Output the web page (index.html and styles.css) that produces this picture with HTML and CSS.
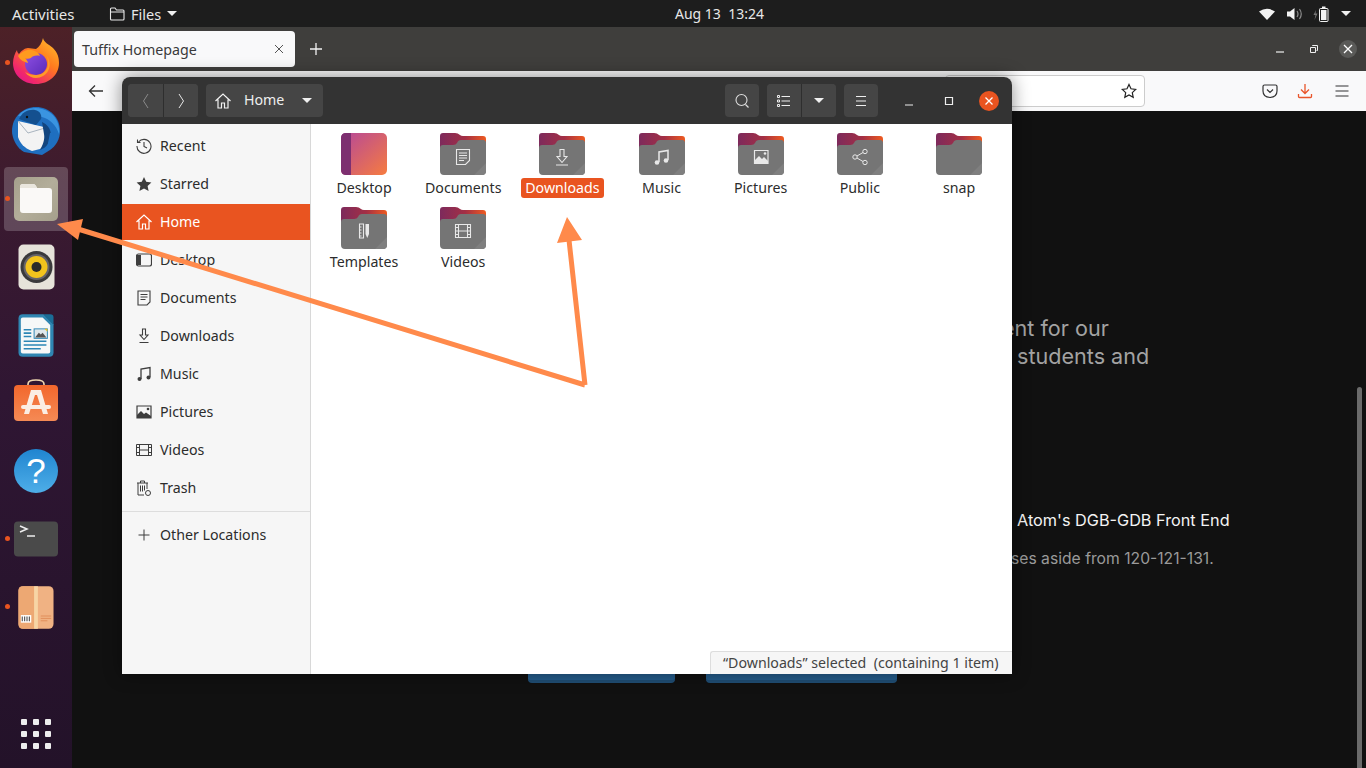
FILE: index.html
```html
<!DOCTYPE html>
<html lang="en">
<head>
<meta charset="utf-8">
<title>Files</title>
<link rel="stylesheet" href="styles.css">
</head>
<body>
<svg class="defs" width="0" height="0">
  <defs>
    <linearGradient id="fb" x1="0" y1="0" x2="1" y2="0"><stop offset="0" stop-color="#7d2a5c"/><stop offset=".55" stop-color="#a32f45"/><stop offset="1" stop-color="#ee5a20"/></linearGradient>
    <linearGradient id="dg" x1="0" y1="0" x2="1" y2="1"><stop offset="0" stop-color="#b5479a"/><stop offset="1" stop-color="#f67c40"/></linearGradient>
    <linearGradient id="ff" x1="1" y1="0" x2=".2" y2="1"><stop offset="0" stop-color="#ffc72e"/><stop offset=".45" stop-color="#ff7a1e"/><stop offset=".85" stop-color="#f0266d"/><stop offset="1" stop-color="#e3188a"/></linearGradient>
    <linearGradient id="ffp" x1="0" y1="0" x2="1" y2="1"><stop offset="0" stop-color="#8f4fe4"/><stop offset="1" stop-color="#5a2bb8"/></linearGradient>
    <linearGradient id="sw" x1="0" y1="0" x2="0" y2="1"><stop offset="0" stop-color="#f2672c"/><stop offset="1" stop-color="#f58a55"/></linearGradient>
    <linearGradient id="hp" x1="0" y1="0" x2="0" y2="1"><stop offset="0" stop-color="#2085d0"/><stop offset="1" stop-color="#4eaee8"/></linearGradient>
    <linearGradient id="kh" x1="0" y1="0" x2="1" y2="1"><stop offset="0" stop-color="#a5a08c"/><stop offset=".5" stop-color="#b3ae9a"/><stop offset="1" stop-color="#a5a08c"/></linearGradient>
    <symbol id="folder" viewBox="0 0 46 42">
      <path d="M0 12V3q0-3 3-3h12q3 0 5 2 1 1 3 1h20q3 0 3 3v10H0z" fill="url(#fb)"/>
      <path d="M0 38V15q0-3 3-3h10q3 0 4-2 1-3 4-3h22q3 0 3 3v28q0 4-4 4H4q-4 0-4-4z" fill="#757575"/>
      <path d="M46 30v8q0 4-4 4h-8z" fill="#7f7f7f"/>
    </symbol>
  </defs>
</svg>

<header class="topbar">
  <span class="top-activities">Activities</span>
  <span class="top-files">
    <svg class="ic16" viewBox="0 0 16 16"><path d="M1.500 13V3q0-1 1-1h3.500l1.500 2h6.500q1 0 1 1v8q0 1-1 1h-11.500q-1 0-1-1zM1.500 6h13" fill="none" stroke="#e8e8e8" stroke-width="1.100"/></svg>
    Files
    <i class="caret"></i>
  </span>
  <span class="top-clock">Aug 13&nbsp;&nbsp;13:24</span>
  <span class="top-tray">
    <svg class="tray-wifi" viewBox="0 0 16 12"><path d="M0 3.500Q8-2 16 3.500L8 12z" fill="#f2f2f2"/></svg>
    <svg class="tray-vol" viewBox="0 0 16 14"><path d="M0 4.500h3L7.500 1v12L3 9.500H0z" fill="#f2f2f2"/><path d="M10 4q2 3 0 6M12.500 2q3.500 5 0 10" fill="none" stroke="#8c8c8c" stroke-width="1.200"/></svg>
    <svg class="tray-bat" viewBox="0 0 16 16"><path d="M3 4 .5 9h2l-1 5 3-6.500h-2z" fill="#777"/><rect x="6.500" y="2.500" width="8.500" height="13" rx="1" fill="#1d1d1d" stroke="#f2f2f2"/><rect x="8" y="4" width="5.500" height="10" fill="#f2f2f2"/><rect x="9" y=".5" width="3.500" height="2" fill="#f2f2f2"/></svg>
    <i class="caret"></i>
  </span>
</header>

<div class="desktop">
  <nav class="dock">
    <div class="dock-item" aria-label="Firefox"><i class="dot"></i>
      <svg class="up2" width="46" height="46" viewBox="0 0 46 46">
        <path d="M30 0c1 5 6 6 10 10 5 5 6 10 6 15 0 12-10 21-23 21S0 37 0 25c0-5 2-10 4-13 0 2 1 3 2 4 2-3 6-6 9-6 3 0 5 1 8 1 3-2 6-6 7-11z" fill="url(#ff)"/>
        <circle cx="23" cy="26" r="11" fill="url(#ffp)"/>
        <path d="M33 17c4 4 5 11 2 16-2 4-7 7-12 7-4 0-8-2-11-6 3 2 7 3 11 3 6 0 11-4 12-10 0-4 0-7-2-10z" fill="#ff9a28"/>
        <path d="M5 18c3-4 9-7 14-6 4 1 7 3 8 6-4-1-8 0-9 2-2 1-5 1-6 0 2 2 3 4 3 5-4-1-8-3-10-7z" fill="#ff9a1f"/>
      </svg>
    </div>
    <div class="dock-item" aria-label="Thunderbird">
      <svg width="48" height="48" viewBox="0 0 48 48">
        <path d="M0 24C0 10 11 0 24 0s24 10 24 24c0 8-4 15-10 19l-8 5-18-3C5 41 0 32 0 24z" fill="#1f6fc0"/>
        <path d="M6 9C12 1 26-2 37 5c8 5 11 14 10 22-3-9-9-15-17-17-9-2-17 0-24-1z" fill="#3a94e0"/>
        <path d="M6 14 32 20l2 17-6 5-8 2C12 41 8 36 6 30z" fill="#f3f3f3"/>
        <path d="M6 14 16 26 33 21" fill="none" stroke="#a9b4bf" stroke-width="1"/>
        <path d="M7 12c3-7 10-10 16-9 5 1 7 5 6 9l-5 6-9-3z" fill="#14508f"/>
        <path d="M30 15c5 2 9 7 9 13-1 8-5 13-11 15 3-5 5-11 4-16z" fill="#12457f"/>
        <path d="M38 26l5-1-3 5 4 0-5 5 2 1-6 5" fill="#1f6fc0"/>
        <circle cx="15" cy="10" r="1.200" fill="#111"/>
      </svg>
    </div>
    <div class="dock-item active" aria-label="Files"><i class="dot"></i>
      <svg width="46" height="46" viewBox="0 0 46 46">
        <rect width="44" height="44" x="1" y="1" rx="5" fill="url(#kh)"/>
        <path d="M7 11q0-3 3-3h10q2 0 3 2l1 2h12q3 0 3 3v19q0 3-3 3H10q-3 0-3-3z" fill="#faf9f7"/>
        <path d="M7 11q0-3 3-3h10q2 0 3 2l1 2H7z" fill="#e9e6dd"/>
      </svg>
    </div>
    <div class="dock-item" aria-label="Rhythmbox">
      <svg width="37" height="46" viewBox="0 0 37 46">
        <rect width="36" height="45" x=".5" y=".5" rx="5" fill="#e6e3da"/>
        <circle cx="18.500" cy="23" r="16" fill="#3a3a3c"/>
        <circle cx="18.500" cy="23" r="13" fill="#66646a"/>
        <circle cx="18.500" cy="23" r="11" fill="#f2c31d"/>
        <circle cx="18.500" cy="23" r="5" fill="#2a2a2a"/>
      </svg>
    </div>
    <div class="dock-item" aria-label="Writer">
      <svg width="36" height="45" viewBox="0 0 38 46">
        <path d="M5 .5h22L37.500 11v30q0 4.500-4.500 4.500H5Q.5 45.500.5 41V5Q.5.5 5 .5z" fill="#2f86b2"/>
        <path d="M5 4h21l8 8v28q0 2-2 2H5q-2 0-2-2V6q0-2 2-2z" fill="#f6f8f8"/>
        <path d="M27 .5h7q3.500 0 3.500 3.500v8z" fill="#1a6d97"/>
        <path d="M6 17h8M6 20.500h8M6 24h8M6 29h24M6 33h24M6 37h18" stroke="#2d86b5" stroke-width="1.700"/>
        <rect x="17" y="16" width="14" height="10" fill="#dfe8ec" stroke="#2d86b5"/>
        <path d="M18 25l4-5 2 2 2-2 4 5z" fill="#555"/>
        <path d="M28 16h3v3z" fill="#f2c31d"/>
      </svg>
    </div>
    <div class="dock-item" aria-label="Software">
      <svg class="up6" width="46" height="42" viewBox="0 0 46 42">
        <path d="M15 6V5q0-4 8-4t8 4v1" fill="none" stroke="#f0d8b0" stroke-width="1.600"/>
        <rect x="1" y="6" width="44" height="36" rx="4" fill="url(#sw)"/>
        <path d="M18 11h10l7 24h-5l-6-19h-2l-6 19h-5z" fill="#fbeee4"/>
        <rect x="8" y="26" width="30" height="4" rx="2" fill="#fbeee4"/>
      </svg>
    </div>
    <div class="dock-item" aria-label="Help">
      <svg width="46" height="46" viewBox="0 0 46 46">
        <circle cx="23" cy="23" r="22" fill="url(#hp)"/>
        <text x="23" y="35" class="help-q">?</text>
      </svg>
    </div>
    <div class="dock-item" aria-label="Terminal"><i class="dot"></i>
      <svg width="46" height="36" viewBox="0 0 46 36">
        <rect width="44" height="35" x="1" y=".5" rx="4" fill="#4a4a4a"/>
        <path d="M7 5l7 3-7 3" fill="none" stroke="#eee" stroke-width="1.500"/>
        <path d="M14 15h8" stroke="#eee" stroke-width="1.500"/>
      </svg>
    </div>
    <div class="dock-item" aria-label="Archive"><i class="dot"></i>
      <svg width="36" height="45" viewBox="0 0 38 46">
        <rect width="37" height="45" x=".5" y=".5" rx="5" fill="#f0b283"/>
        <path d="M5 .5h12v45H5Q.5 45.500.5 41V5Q.5.5 5 .5z" fill="#eda873"/>
        <rect x="17" y=".5" width="4" height="45" fill="#f7d5a5"/>
        <rect x="3" y="31" width="11" height="8" fill="#fff"/>
        <path d="M4.500 32.500v5M7 32.500v5M9.500 32.500v5M12 32.500v5" stroke="#555" stroke-width="1.200"/>
        <path d="M24 32h11M24 34.500h11M24 37h7" stroke="#dd8a55" stroke-width=".9"/>
      </svg>
    </div>
    <div class="dock-apps" aria-label="Show applications">
      <i></i><i></i><i></i><i></i><i></i><i></i><i></i><i></i><i></i>
    </div>
  </nav>

  <main class="browser">
    <div class="tabbar">
      <div class="tab">
        <span>Tuffix Homepage</span>
        <svg class="ic10" viewBox="0 0 10 10"><path d="M1 1l8 8M9 1l-8 8" stroke="#555" stroke-width="1"/></svg>
      </div>
      <svg class="newtab" viewBox="0 0 12 12"><path d="M6 0v12M0 6h12" stroke="#f2f2f2" stroke-width="1.300"/></svg>
      <div class="win-ctl">
        <svg class="ic10" viewBox="0 0 10 10"><path d="M1 8h8" stroke="#f0f0f0" stroke-width="1.200"/></svg>
        <svg class="ic10" viewBox="0 0 10 10"><path d="M1.500 3.500h5V8.500h-5zM3.500 2V1.500h5V6.500H7.500" fill="none" stroke="#f0f0f0" stroke-width="1"/></svg>
        <span class="win-close"><svg class="ic10" viewBox="0 0 10 10"><path d="M1 1l8 8M9 1l-8 8" stroke="#fff" stroke-width="1.300"/></svg></span>
      </div>
    </div>
    <div class="navbar">
      <svg class="back" viewBox="0 0 16 14"><path d="M15 7H1.500M7 1.500 1.500 7 7 12.500" fill="none" stroke="#333" stroke-width="1.300"/></svg>
      <div class="urlbar">
        <svg class="ic16" viewBox="0 0 16 16"><path d="M8 1.500l2 4.300 4.700.6-3.400 3.200.9 4.700L8 12l-4.200 2.300.9-4.700L1.300 6.400 6 5.800z" fill="none" stroke="#222" stroke-width="1.200"/></svg>
      </div>
      <div class="nav-tools">
        <svg class="ic16" viewBox="0 0 16 16"><path d="M2.500 2h11q1.500 0 1.500 1.500V8q0 6-7 6.500Q1 14 1 8V3.500Q1 2 2.500 2zM5 6.500l3 3 3-3" fill="none" stroke="#333" stroke-width="1.200"/></svg>
        <svg class="ic16" viewBox="0 0 16 16"><path d="M8 1v9M4 6.500 8 10.500l4-4M1.500 11v2.500q0 1 1 1h11q1 0 1-1V11" fill="none" stroke="#e9552a" stroke-width="1.300"/></svg>
        <svg class="ic16 last-tool" viewBox="0 0 16 16"><path d="M1.500 3h13M1.500 8h13M1.500 13h13" stroke="#333" stroke-width="1.200"/></svg>
      </div>
    </div>
    <div class="page">
      <p class="page-lead">ent for our</p>
      <p class="page-lead second">students and</p>
      <p class="page-item">Atom's DGB-GDB Front End</p>
      <p class="page-note">ses aside from 120-121-131.</p>
      <div class="page-buttons"><span class="btn-a"></span><span class="btn-b"></span></div>
      <div class="scrollthumb"></div>
    </div>
  </main>
</div>

<section class="files">
  <div class="f-head">
    <div class="btn-group">
      <span class="hbtn nav"><svg class="ic16" viewBox="0 0 16 16"><path d="M10 1 5.500 8 10 15" fill="none" stroke="#8a8a8a" stroke-width="1"/></svg></span>
      <span class="hbtn nav"><svg class="ic16" viewBox="0 0 16 16"><path d="M6 1l4.500 7L6 15" fill="none" stroke="#e6e6e6" stroke-width="1"/></svg></span>
    </div>
    <div class="pathbtn">
      <svg class="ic16" viewBox="0 0 16 16"><path d="M.5 8 8 1l7.500 7M3 6.500V15h3.500v-5h3v5H13V6.500" fill="none" stroke="#f2f2f2" stroke-width="1.200"/></svg>
      <span>Home</span>
      <i class="caret"></i>
    </div>
    <div class="head-right">
      <span class="hbtn solo"><svg class="ic16" viewBox="0 0 16 16"><circle cx="7.500" cy="7" r="5.500" fill="none" stroke="#ddd" stroke-width="1.100"/><path d="M11.500 11.500l3 3" stroke="#ddd" stroke-width="1.300"/></svg></span>
      <div class="btn-group">
        <span class="hbtn solo"><svg class="ic16" viewBox="0 0 16 16"><path d="M1.500 2.500h2v2h-2zM1.500 7h2v2h-2zM1.500 11.500h2v2h-2z" fill="none" stroke="#eee" stroke-width="1"/><path d="M5.500 3.500H14M5.500 8H14M5.500 12.500H14" stroke="#eee" stroke-width="1.100"/></svg></span>
        <span class="hbtn solo"><i class="caret"></i></span>
      </div>
      <span class="hbtn solo"><svg class="ic16" viewBox="0 0 16 16"><path d="M3 3.500h10M3 8h10M3 12.500h10" stroke="#eee" stroke-width="1.100"/></svg></span>
      <div class="f-ctl">
        <svg class="ic10" viewBox="0 0 10 10"><path d="M1 9h8" stroke="#eee" stroke-width="1.200"/></svg>
        <svg class="ic10" viewBox="0 0 10 10"><path d="M1.500 1.500h7v7h-7z" fill="none" stroke="#eee" stroke-width="1.200"/></svg>
        <span class="f-close"><svg class="ic10" viewBox="0 0 10 10"><path d="M1.500 1.500l7 7M8.500 1.500l-7 7" stroke="#fff" stroke-width="1.300"/></svg></span>
      </div>
    </div>
  </div>
  <div class="f-body">
    <aside class="side">
      <div class="side-row"><svg class="ic16" viewBox="0 0 16 16"><path d="M2.500 4A7 7 0 1 1 1 8M1.500 1.500V4.500H4.500M8 4v4.500l3 1.500" fill="none" stroke="#3d3d3d" stroke-width="1.100"/></svg><span>Recent</span></div>
      <div class="side-row"><svg class="ic16" viewBox="0 0 16 16"><path d="M8 1l2.200 4.800 5.200.6-3.800 3.500 1 5.100L8 12.500 3.400 15l1-5.100L.6 6.400l5.200-.6z" fill="#3d3d3d"/></svg><span>Starred</span></div>
      <div class="side-row sel"><svg class="ic16" viewBox="0 0 16 16"><path d="M.5 8 8 1l7.500 7M3 6.500V15h3.500v-5h3v5H13V6.500" fill="none" stroke="#fff" stroke-width="1.200"/></svg><span>Home</span></div>
      <div class="side-row"><svg class="ic16" viewBox="0 0 16 16"><rect x=".5" y="2" width="15" height="12" rx="2" fill="none" stroke="#3d3d3d" stroke-width="1.200"/><path d="M1 3h4v10H1z" fill="#3d3d3d"/></svg><span>Desktop</span></div>
      <div class="side-row"><svg class="ic16" viewBox="0 0 16 16"><path d="M2 1h12v11l-3 3H2zM4.500 4.500h7M4.500 7h7M4.500 9.500h5" fill="none" stroke="#3d3d3d" stroke-width="1.100"/></svg><span>Documents</span></div>
      <div class="side-row"><svg class="ic16" viewBox="0 0 16 16"><path d="M6.500 1h3v6H12l-4 4.500L4 7h2.500zM3.500 14.500h9" fill="none" stroke="#3d3d3d" stroke-width="1.100"/></svg><span>Downloads</span></div>
      <div class="side-row"><svg class="ic16" viewBox="0 0 16 16"><path d="M5 13V3l9-1.500V11" fill="none" stroke="#3d3d3d" stroke-width="1.300"/><circle cx="3.500" cy="13" r="2" fill="#3d3d3d"/><circle cx="12.500" cy="11.500" r="2" fill="#3d3d3d"/></svg><span>Music</span></div>
      <div class="side-row"><svg class="ic16" viewBox="0 0 16 16"><path d="M1 2h14v12H1z" fill="none" stroke="#3d3d3d" stroke-width="1.200"/><path d="M1 14V11l4-4 3 3 2-1.500 5 3.500v2z" fill="#3d3d3d"/><circle cx="12" cy="5" r="1.300" fill="#3d3d3d"/></svg><span>Pictures</span></div>
      <div class="side-row"><svg class="ic16" viewBox="0 0 16 16"><path d="M.5 2.500h15v11H.5zM3.500 2.500v11M12.500 2.500v11M3.500 8h9M.5 5.500h3M.5 10.500h3M12.500 5.500h3M12.500 10.500h3" fill="none" stroke="#3d3d3d" stroke-width="1"/></svg><span>Videos</span></div>
      <div class="side-row"><svg class="ic16" viewBox="0 0 16 16"><path d="M1 3h11M4.500 3V1h4v2M2 3v12h6M11 3v6M4.500 5.500v6M6.500 5.500v6M8.500 5.500v5" fill="none" stroke="#3d3d3d" stroke-width="1"/><circle cx="12" cy="13" r="2.500" fill="none" stroke="#3d3d3d"/></svg><span>Trash</span></div>
      <div class="side-sep"></div>
      <div class="side-row other"><svg class="ic16" viewBox="0 0 16 16"><path d="M8 2.500v11M2.500 8h11" stroke="#3d3d3d" stroke-width="1"/></svg><span>Other Locations</span></div>
    </aside>
    <div class="grid">
      <div class="cell">
        <svg class="fld" viewBox="0 0 46 42"><rect width="46" height="42" rx="5" fill="url(#dg)"/><path d="M5 0h5v42H5q-5 0-5-5V5q0-5 5-5z" fill="#7d2f70"/></svg>
        <span>Desktop</span>
      </div>
      <div class="cell">
        <span class="fwrap"><svg class="fld"><use href="#folder"/></svg><svg class="emb" viewBox="0 0 20 20"><path d="M3.500 2.500h13v11l-4 4h-9zM6 6h8M6 8.500h8M6 11h8M6 13.500h5" fill="none" stroke="#e8e8e8" stroke-width="1.100"/></svg></span>
        <span>Documents</span>
      </div>
      <div class="cell">
        <span class="fwrap"><svg class="fld"><use href="#folder"/></svg><svg class="emb" viewBox="0 0 20 20"><path d="M8 2.500h4v7h3l-5 6-5-6h3zM4 18h12" fill="none" stroke="#e8e8e8" stroke-width="1.100"/></svg></span>
        <span class="picked">Downloads</span>
      </div>
      <div class="cell">
        <span class="fwrap"><svg class="fld"><use href="#folder"/></svg><svg class="emb" viewBox="0 0 20 20"><path d="M7 15V5l9-1.500V13" fill="none" stroke="#e8e8e8" stroke-width="1.500"/><circle cx="5" cy="15.500" r="2.300" fill="#e8e8e8"/><circle cx="14" cy="13.500" r="2.300" fill="#e8e8e8"/></svg></span>
        <span>Music</span>
      </div>
      <div class="cell">
        <span class="fwrap"><svg class="fld"><use href="#folder"/></svg><svg class="emb" viewBox="0 0 20 20"><path d="M3.500 3.500h13.500v13H3.500z" fill="none" stroke="#e8e8e8" stroke-width="1.200"/><path d="M4 16v-3l4-4 3 3 2-2 4 4v2z" fill="#e8e8e8"/><circle cx="14" cy="6.500" r="1.300" fill="#e8e8e8"/></svg></span>
        <span>Pictures</span>
      </div>
      <div class="cell">
        <span class="fwrap"><svg class="fld"><use href="#folder"/></svg><svg class="emb" viewBox="0 0 20 20"><circle cx="5" cy="10" r="2.200" fill="none" stroke="#e8e8e8"/><circle cx="15" cy="4.500" r="2.200" fill="none" stroke="#e8e8e8"/><circle cx="15" cy="15.500" r="2.200" fill="none" stroke="#e8e8e8"/><path d="M7 9l6-3.500M7 11l6 3.500" stroke="#e8e8e8"/></svg></span>
        <span>Public</span>
      </div>
      <div class="cell">
        <span class="fwrap"><svg class="fld"><use href="#folder"/></svg></span>
        <span>snap</span>
      </div>
      <div class="cell">
        <span class="fwrap"><svg class="fld"><use href="#folder"/></svg><svg class="emb" viewBox="0 0 20 20"><path d="M5.500 3h4v14h-4zM5.500 6h2M5.500 9h2M5.500 12h2M5.500 15h2" fill="none" stroke="#e8e8e8" stroke-width="1.100"/><path d="M11.500 3h3.500v10l-1.750 4-1.750-4z" fill="#e8e8e8"/></svg></span>
        <span>Templates</span>
      </div>
      <div class="cell">
        <span class="fwrap"><svg class="fld"><use href="#folder"/></svg><svg class="emb" viewBox="0 0 20 20"><path d="M2.500 3.500h15v13h-15zM5.500 3.500v13M14.500 3.500v13M5.500 10h9M2.500 6.500h3M2.500 10h3M2.500 13.500h3M14.500 6.500h3M14.500 10h3M14.500 13.500h3" fill="none" stroke="#e8e8e8" stroke-width="1.100"/></svg></span>
        <span>Videos</span>
      </div>
    </div>
  </div>
  <div class="status">“Downloads” selected&nbsp;&nbsp;(containing 1 item)</div>
</section>

<svg class="arrows" viewBox="0 0 1366 768">
  <path d="M585 385 569 240M585 385 78 229" fill="none" stroke="#ff8a4b" stroke-width="5"/>
  <path d="M567 217 557 243 582 240zM57 224 83 219 78 240z" fill="#ff8a4b"/>
</svg>
</body>
</html>
```
FILE: styles.css
```css
* { box-sizing: border-box; }
html, body { margin: 0; height: 768px; overflow: hidden; }
body {
  display: flex;
  flex-direction: column;
  width: 1366px;
  background: #111;
  font-family: "Noto Sans", "Open Sans", sans-serif;
  position: relative;
}
svg { display: block; flex: none; }
.defs { position: absolute; }
.ic16 { width: 16px; height: 16px; }
.ic10 { width: 10px; height: 10px; }
.caret {
  display: inline-block;
  width: 0;
  height: 0;
  border-left: 5px solid transparent;
  border-right: 5px solid transparent;
  border-top: 5px solid #f0f0f0;
}

/* top bar */
.topbar {
  flex: none;
  height: 27px;
  background: #1d1d1d;
  color: #e8e8e8;
  font-size: 14px;
  display: flex;
  align-items: center;
  position: relative;
  padding-left: 12px;
}
.top-activities { width: 97px; font-size: 15px; }
.top-files { display: flex; align-items: center; gap: 6px; font-size: 14.5px; }
.top-clock { position: absolute; left: 675px; }
.top-tray { margin-left: auto; display: flex; align-items: center; padding-right: 15px; }
.tray-wifi { width: 16px; height: 12px; margin-right: 12px; }
.tray-vol { width: 16px; height: 14px; margin-right: 10px; }
.tray-bat { width: 16px; height: 16px; margin-right: 12px; }

/* desktop */
.desktop { flex: 1; display: flex; min-height: 0; }
.dock {
  flex: none;
  width: 72px;
  background: linear-gradient(180deg, #4d2127 0%, #3a1a30 25%, #2f1633 50%, #231229 100%);
  display: flex;
  flex-direction: column;
  align-items: center;
  padding-top: 4px;
  position: relative;
}
.dock-item {
  width: 64px;
  height: 64px;
  margin-bottom: 4px;
  display: flex;
  align-items: center;
  justify-content: center;
  border-radius: 4px;
  position: relative;
}
.dock-item.active { background: rgba(255, 255, 255, .2); }
.up2 { margin-bottom: 4px; }
.up6 { margin-bottom: 6px; }
.dot {
  position: absolute;
  left: 1px;
  top: 29px;
  width: 5px;
  height: 5px;
  border-radius: 50%;
  background: #e95420;
}
.help-q { fill: #fff; font-size: 35px; text-anchor: middle; font-family: "Liberation Sans", sans-serif; }
.dock-apps {
  position: absolute;
  left: 21px;
  top: 692px;
  display: grid;
  grid-template-columns: repeat(3, 6px);
  gap: 6px;
}
.dock-apps i { width: 6px; height: 6px; border-radius: 1px; background: #eee; }

/* browser */
.browser { flex: 1; display: flex; flex-direction: column; min-width: 0; }
.tabbar {
  flex: none;
  height: 44px;
  background: #3f3e3c;
  display: flex;
  align-items: center;
  padding-left: 2px;
}
.tab {
  width: 221px;
  height: 36px;
  background: #f9f9fa;
  border-radius: 4px;
  display: flex;
  align-items: center;
  justify-content: space-between;
  padding: 0 11px 0 8px;
  color: #3a3a3a;
  font-size: 14.25px;
}
.newtab { width: 12px; height: 12px; margin-left: 15px; }
.win-ctl { margin-left: auto; display: flex; align-items: center; gap: 24px; padding-right: 9px; }
.win-close {
  width: 18px;
  height: 18px;
  margin-left: -4px;
  border-radius: 50%;
  background: #5a5a58;
  display: flex;
  align-items: center;
  justify-content: center;
}
.navbar {
  flex: none;
  height: 40px;
  background: #f9f9fa;
  display: flex;
  align-items: center;
  padding: 0 16px;
}
.back { width: 16px; height: 14px; }
.urlbar {
  width: 200px;
  height: 32px;
  margin-left: 841px;
  background: #fff;
  border: 1px solid #ccc;
  border-radius: 4px;
  display: flex;
  align-items: center;
  justify-content: flex-end;
  padding-right: 7px;
}
.nav-tools { margin-left: auto; display: flex; align-items: center; gap: 19px; }
.last-tool { margin-left: 2px; }
.page {
  flex: 1;
  background: #111;
  position: relative;
  padding: 203px 0 0 945px;
  font-family: "Inter", sans-serif;
}
.page p { margin: 0; white-space: nowrap; }
.page-lead { font-size: 21.6px; line-height: 28px; color: #a3a3a3; margin-left: -15px !important; }
.page-lead.second { margin-left: 0 !important; }
.page-item { font-size: 16.25px; line-height: 24px; color: #f4f4f4; margin-top: 138px !important; }
.page-note { font-size: 15.7px; line-height: 24px; color: #9a9a9a; margin: 15px 0 0 -6px !important; }
.page-buttons {
  position: absolute;
  left: 456px;
  top: 522px;
  display: flex;
  gap: 31px;
}
.btn-a, .btn-b {
  height: 50px;
  background: #255e8e;
  border-bottom: 3px solid #204e75;
  border-radius: 4px;
}
.btn-a { width: 147px; }
.btn-b { width: 191px; }
.scrollthumb {
  position: absolute;
  left: 1285px;
  top: 276px;
  width: 5px;
  height: 400px;
  border-radius: 3px;
  background: #6b6b6b;
}

/* files window */
.files {
  position: absolute;
  left: 122px;
  top: 77px;
  width: 890px;
  height: 597px;
  display: flex;
  flex-direction: column;
  background: #fff;
  border-radius: 8px 8px 0 0;
  box-shadow: 0 0 18px rgba(0, 0, 0, .45);
  overflow: hidden;
  font-size: 14.2px;
  color: #2c2c2c;
}
.f-head {
  flex: none;
  height: 47px;
  background: #333;
  display: flex;
  align-items: center;
  padding: 0 13px 0 6px;
  color: #eee;
}
.btn-group { display: flex; background: #454545; border-radius: 4px; }
.hbtn {
  height: 33px;
  display: flex;
  align-items: center;
  justify-content: center;
  background: #454545;
  border-radius: 4px;
}
.hbtn.nav { width: 35px; }
.hbtn.solo { width: 34px; }
.btn-group .hbtn + .hbtn { border-left: 1px solid #2e2e2e; border-radius: 0 4px 4px 0; width: 35px; }
.pathbtn {
  width: 117px;
  height: 33px;
  margin-left: 8px;
  background: #454545;
  border-radius: 4px;
  display: flex;
  align-items: center;
  padding: 0 11px 0 9px;
}
.pathbtn span { margin-left: 13px; flex: 1; padding-bottom: 2px; }
.head-right { margin-left: auto; display: flex; align-items: center; gap: 8px; }
.f-ctl { display: flex; align-items: center; gap: 30px; margin-left: 18px; }
.f-close {
  width: 20px;
  height: 20px;
  margin-left: -5px;
  border-radius: 50%;
  background: #e95420;
  display: flex;
  align-items: center;
  justify-content: center;
}
.f-body { flex: 1; display: flex; min-height: 0; }
.side {
  flex: none;
  width: 189px;
  background: #f6f6f6;
  border-right: 1px solid #d8d8d8;
  padding-top: 3px;
}
.side-row {
  height: 38px;
  display: flex;
  align-items: center;
  gap: 8px;
  padding-left: 14px;
}
.side-row span { padding-bottom: 2px; }
.side-row.sel { height: 36px; margin: 1px 0; background: #e95420; color: #fff; }
.side-sep { height: 1px; background: #ddd; margin-top: 4px; }
.side-row.other { margin-top: 4px; }
.grid {
  flex: 1;
  display: grid;
  grid-template-columns: repeat(7, 99.17px);
  grid-auto-rows: 74px;
  align-content: start;
  padding: 9px 0 0 3.5px;
}
.cell { display: flex; flex-direction: column; align-items: center; }
.fwrap { position: relative; display: block; width: 46px; height: 42px; }
.fld { width: 46px; height: 42px; }
.emb { position: absolute; left: 13px; top: 14px; width: 20px; height: 20px; }
.cell > span:last-child { margin-top: 3px; padding: 0 4px; line-height: 20px; border-radius: 3px; }
.cell > span.fwrap:last-child { margin-top: 0; }
.cell > span.picked { background: #e95420; color: #fff; }
.status {
  position: absolute;
  right: 0;
  bottom: 0;
  width: 302px;
  height: 23px;
  background: #f6f6f6;
  border: 1px solid #ddd;
  border-width: 1px 0 0 1px;
  border-radius: 3px 0 0 0;
  padding-left: 12px;
  line-height: 22px;
  color: #444;
  white-space: nowrap;
}

/* annotation arrows */
.arrows {
  position: absolute;
  left: 0;
  top: 0;
  width: 1366px;
  height: 768px;
  pointer-events: none;
}
```
